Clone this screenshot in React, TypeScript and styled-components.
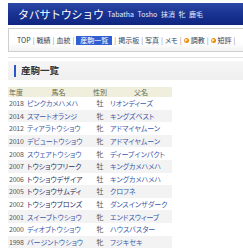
import React from "react";
import styled, { createGlobalStyle } from "styled-components";

const GlobalStyle = createGlobalStyle`
  html, body {
    margin: 0;
    padding: 0;
    background: #ffffff;
    overflow: hidden;
  }
  body {
    font-family: "Noto Sans CJK JP", "DejaVu Sans", sans-serif;
    font-feature-settings: "palt";
    color: #333333;
  }
`;

const Page = styled.div`
  width: 420px;
  padding: 3px 0 0 8px;
`;

const Header = styled.div`
  height: 22px;
  display: flex;
  align-items: center;
  gap: 4px;
  padding-left: 10px;
  background: linear-gradient(to bottom, #2c48a6 0%, #1a3493 45%, #0f2580 100%);
`;

const Title = styled.span`
  color: #ffffff;
  font-size: 11px;
  line-height: 1;
  font-feature-settings: normal;
  letter-spacing: -0.3px;
`;

const Sub = styled.span`
  color: #e6ebff;
  font-size: 7px;
  line-height: 1;
  word-spacing: 2px;
`;

const NavBox = styled.div`
  margin-top: 3px;
  height: 22px;
  border: 1px solid #cfcfcf;
  background: linear-gradient(to bottom, #ffffff 60%, #f3f3f3 100%);
  display: flex;
  align-items: center;
  padding-left: 8px;
`;

const NavItem = styled.span<{ active?: boolean }>`
  font-size: 7px;
  line-height: 9px;
  padding: 0 ${(props) => (props.active ? "4px" : "0")};
  color: ${(props) => (props.active ? "#ffffff" : "#333d55")};
  background: ${(props) => (props.active ? "#2f5fd0" : "transparent")};
  display: inline-flex;
  align-items: center;
  gap: 1px;
`;

const Sep = styled.span`
  font-size: 7px;
  color: #888888;
  margin: 0 2px;
`;

const PIcon = styled.span`
  width: 5px;
  height: 5px;
  border-radius: 50%;
  background: #f08a00;
  color: #ffffff;
  font-size: 4px;
  line-height: 5px;
  text-align: center;
  font-weight: bold;
  margin-right: 1px;
`;

const Divider = styled.div`
  margin-top: 5px;
  height: 1px;
  background: #e2e2e2;
`;

const SectionHead = styled.div`
  margin-top: 3px;
  height: 19px;
  display: flex;
  align-items: center;
  gap: 5px;
  padding-left: 6px;
  background: linear-gradient(to bottom, #f6f6f6 0%, #efefef 100%);
`;

const Bar = styled.span`
  width: 2px;
  height: 12px;
  background: #2d56c8;
`;

const SectionTitle = styled.span`
  font-size: 9.5px;
  font-weight: bold;
  color: #333333;
  line-height: 1;
  font-feature-settings: normal;
`;

const Table = styled.table`
  margin-top: 7px;
  width: 160px;
  border-collapse: collapse;
  table-layout: fixed;
  font-size: 7px;
`;

const Th = styled.th<{ align?: string; w: number }>`
  width: ${(props) => props.w}px;
  height: 10px;
  padding: 0 0 0 1px;
  background: #f0eedc;
  color: #5b6b55;
  font-weight: normal;
  text-align: ${(props) => props.align || "center"};
  line-height: 10px;
`;

const Tr = styled.tr<{ striped?: boolean }>`
  background: ${(props) => (props.striped ? "#f3f3f3" : "#ffffff")};
`;

const Td = styled.td<{ align?: string }>`
  height: 12.6px;
  padding: 0 0 0 1px;
  text-align: ${(props) => props.align || "left"};
  white-space: nowrap;
  overflow: hidden;
  line-height: 12px;
`;

const Year = styled.span`
  color: #555555;
  letter-spacing: -0.2px;
`;

const Link = styled.span<{ dark?: boolean }>`
  color: ${(props) => (props.dark ? "#1f2f66" : "#3a58a8")};
`;

const Sex = styled.span`
  color: #555555;
`;

const navItems: { label: string; active?: boolean; p?: boolean }[] = [
  { label: "TOP" },
  { label: "戦績" },
  { label: "血統" },
  { label: "産駒一覧", active: true },
  { label: "掲示板" },
  { label: "写真" },
  { label: "メモ" },
  { label: "調教", p: true },
  { label: "短評", p: true },
];

const rows: { year: string; name: string; sex: string; sire: string; dark?: boolean }[] = [
  { year: "2018", name: "ピンクカメハメハ", sex: "牡", sire: "リオンディーズ" },
  { year: "2014", name: "スマートオランジ", sex: "牝", sire: "キングズベスト" },
  { year: "2012", name: "ティアラトウショウ", sex: "牝", sire: "アドマイヤムーン" },
  { year: "2010", name: "デビュートウショウ", sex: "牝", sire: "アドマイヤムーン" },
  { year: "2008", name: "スウェアトウショウ", sex: "牝", sire: "ディープインパクト" },
  { year: "2007", name: "トウショウフリーク", sex: "牡", sire: "キングカメハメハ", dark: true },
  { year: "2006", name: "トウショウデザイア", sex: "牡", sire: "キングカメハメハ", dark: true },
  { year: "2005", name: "トウショウサムディ", sex: "牡", sire: "クロフネ", dark: true },
  { year: "2002", name: "トウショウブロンズ", sex: "牡", sire: "ダンスインザダーク", dark: true },
  { year: "2001", name: "スイーブトウショウ", sex: "牝", sire: "エンドスウィーブ" },
  { year: "2000", name: "ディオブトウショウ", sex: "牝", sire: "ハウスバスター" },
  { year: "1998", name: "バージントウショウ", sex: "牝", sire: "フジキセキ" },
];

export default function App() {
  return (
    <>
      <GlobalStyle />
      <Page>
        <Header>
          <Title>タバサトウショウ</Title>
          <Sub>Tabatha Tosho 抹消 牝 鹿毛</Sub>
        </Header>
        <NavBox>
          {navItems.map((item) => (
            <React.Fragment key={item.label}>
              <NavItem active={item.active}>
                {item.p && <PIcon>P</PIcon>}
                {item.label}
              </NavItem>
              <Sep>|</Sep>
            </React.Fragment>
          ))}
        </NavBox>
        <Divider />
        <SectionHead>
          <Bar />
          <SectionTitle>産駒一覧</SectionTitle>
        </SectionHead>
        <Table>
          <thead>
            <tr>
              <Th w={17} align="left">年度</Th>
              <Th w={63}>馬名</Th>
              <Th w={18}>性別</Th>
              <Th w={62}>父名</Th>
            </tr>
          </thead>
          <tbody>
            {rows.map((r, i) => (
              <Tr key={r.year} striped={i % 2 === 1}>
                <Td><Year>{r.year}</Year></Td>
                <Td><Link dark={r.dark}>{r.name}</Link></Td>
                <Td align="center"><Sex>{r.sex}</Sex></Td>
                <Td><Link>{r.sire}</Link></Td>
              </Tr>
            ))}
          </tbody>
        </Table>
      </Page>
    </>
  );
}
